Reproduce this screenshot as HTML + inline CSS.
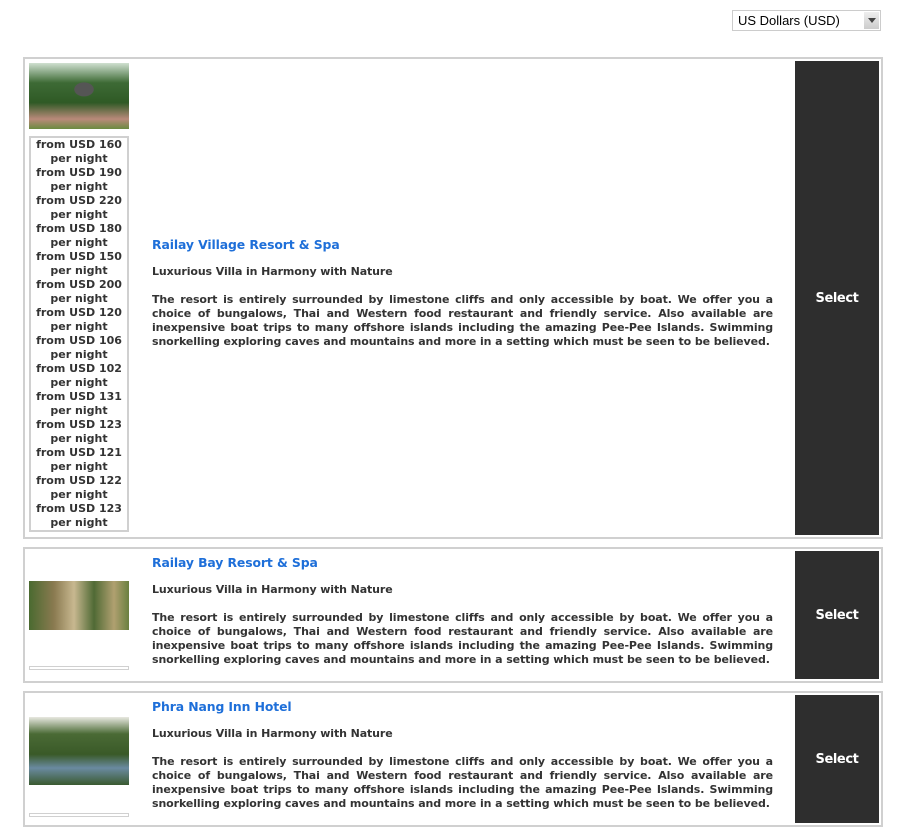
<!DOCTYPE html>
<html><head><style>
body{margin:0;width:906px;height:831px;background:#fff;position:relative;font-family:"DejaVu Sans",Verdana,sans-serif;color:#333;overflow:hidden}
.sel{position:absolute;left:732px;top:10px;width:149px;height:21px;border:1px solid #ccc;box-sizing:border-box;font-family:"Liberation Sans",Arial,sans-serif;font-size:13px;color:#000;line-height:19px;padding-left:5px}
.sel .ar{position:absolute;right:1px;top:1px;width:15px;height:17px;background:linear-gradient(#eee,#ccc);}
.sel .ar:after{content:"";position:absolute;left:4px;top:6px;border-left:4px solid transparent;border-right:4px solid transparent;border-top:5px solid #444}
.box{position:absolute;left:23px;width:860px;border:2px solid #d0d0d0;box-sizing:border-box}
.btn{position:absolute;right:2px;top:2px;bottom:2px;width:84px;background:#2e2e2e;color:#fff;font-weight:bold;font-size:13px;display:flex;align-items:center;justify-content:center;letter-spacing:-0.4px}
.img{position:absolute;left:4px;width:100px;height:66px}
.txt{position:absolute;left:127px;width:621px;font-size:11px;font-weight:bold;letter-spacing:-0.1px}
.txt h2{margin:0;color:#1e6fd9;font-size:12.4px;line-height:18px}
.txt .t{margin:11px 0 0;line-height:14px}
.txt .d{margin:14px 0 0;line-height:14px;text-align:justify}
.price{position:absolute;left:4px;top:77px;width:100px;height:396px;border:2px solid #d0d0d0;box-sizing:border-box;text-align:center;font-size:11px;font-weight:bold;line-height:14px;padding-top:0}
.bar{position:absolute;left:4px;width:100px;height:4px;border:1px solid #d0d0d0;box-sizing:border-box}
</style></head><body>
<div class="sel">US Dollars (USD)<div class="ar"></div></div>

<div class="box" style="top:57px;height:482px">
 <div class="img" style="top:4px;background:radial-gradient(ellipse at 55% 40%,#555 0 12%,transparent 13%),linear-gradient(180deg,#cfe0d0 0%,#3d6a35 30%,#2f5a25 60%,#b98a7a 85%,#6a8a40 100%)"></div>
 <div class="price">from USD 160<br>per night<br>from USD 190<br>per night<br>from USD 220<br>per night<br>from USD 180<br>per night<br>from USD 150<br>per night<br>from USD 200<br>per night<br>from USD 120<br>per night<br>from USD 106<br>per night<br>from USD 102<br>per night<br>from USD 131<br>per night<br>from USD 123<br>per night<br>from USD 121<br>per night<br>from USD 122<br>per night<br>from USD 123<br>per night</div>
 <div class="txt" style="top:177px">
  <h2>Railay Village Resort &amp; Spa</h2>
  <p class="t">Luxurious Villa in Harmony with Nature</p>
  <p class="d">The resort is entirely surrounded by limestone cliffs and only accessible by boat. We offer you a choice of bungalows, Thai and Western food restaurant and friendly service. Also available are inexpensive boat trips to many offshore islands including the amazing Pee-Pee Islands. Swimming snorkelling exploring caves and mountains and more in a setting which must be seen to be believed.</p>
 </div>
 <div class="btn">Select</div>
</div>

<div class="box" style="top:547px;height:136px">
 <div class="img" style="top:32px;height:49px;background:linear-gradient(90deg,#4a6a30 0%,#8a7a50 25%,#c8b890 45%,#506a35 65%,#b0a070 85%,#6a8040 100%)"></div>
 <div class="bar" style="top:117px"></div>
 <div class="txt" style="top:5px">
  <h2>Railay Bay Resort &amp; Spa</h2>
  <p class="t">Luxurious Villa in Harmony with Nature</p>
  <p class="d">The resort is entirely surrounded by limestone cliffs and only accessible by boat. We offer you a choice of bungalows, Thai and Western food restaurant and friendly service. Also available are inexpensive boat trips to many offshore islands including the amazing Pee-Pee Islands. Swimming snorkelling exploring caves and mountains and more in a setting which must be seen to be believed.</p>
 </div>
 <div class="btn">Select</div>
</div>

<div class="box" style="top:691px;height:136px">
 <div class="img" style="top:24px;height:68px;background:linear-gradient(180deg,#e8e8e0 0%,#4a6a35 25%,#3a5a28 55%,#6a8aa0 75%,#3a5a30 100%)"></div>
 <div class="bar" style="top:120px"></div>
 <div class="txt" style="top:5px">
  <h2>Phra Nang Inn Hotel</h2>
  <p class="t">Luxurious Villa in Harmony with Nature</p>
  <p class="d">The resort is entirely surrounded by limestone cliffs and only accessible by boat. We offer you a choice of bungalows, Thai and Western food restaurant and friendly service. Also available are inexpensive boat trips to many offshore islands including the amazing Pee-Pee Islands. Swimming snorkelling exploring caves and mountains and more in a setting which must be seen to be believed.</p>
 </div>
 <div class="btn">Select</div>
</div>
</body></html>
